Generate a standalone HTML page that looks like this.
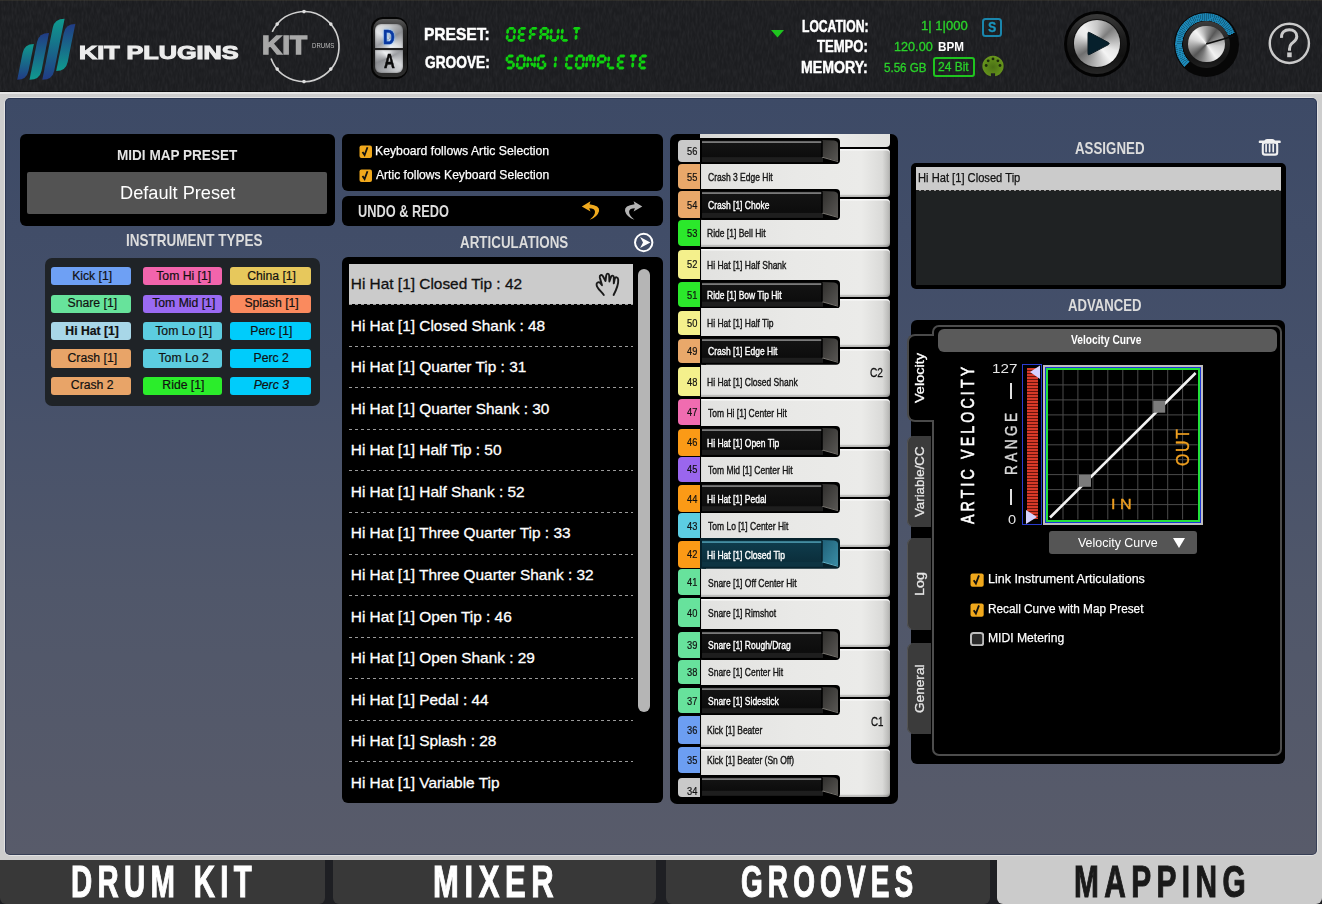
<!DOCTYPE html><html><head><meta charset="utf-8"><style>
html,body{margin:0;padding:0;width:1322px;height:904px;overflow:hidden;background:#1e1f23;}
.b{position:absolute;}
.t{position:absolute;white-space:nowrap;font-family:"Liberation Sans",sans-serif;}
</style></head><body>
<div class="b" style="left:0px;top:0px;width:1322px;height:93px;background:#1c1d20;"></div>
<div class="b" style="left:0px;top:0px;width:1322px;height:1px;background:#2c2b27;"></div>
<div class="b" style="left:0px;top:90.5px;width:1322px;height:1.5px;background:#0b0b0c;"></div>
<svg class="b" style="left:0;top:0" width="1322" height="93"><filter id="tx"><feTurbulence type="fractalNoise" baseFrequency="0.5 0.13" numOctaves="2" seed="11"/><feColorMatrix values="0 0 0 0 0.22  0 0 0 0 0.22  0 0 0 0 0.24  0 0 0 .2 -0.07"/></filter><rect width="1322" height="93" filter="url(#tx)"/></svg>
<svg class="b" style="left:0;top:0" width="90" height="93">
<defs>
<linearGradient id="g1" x1="0" y1="0" x2="0" y2="1"><stop offset="0" stop-color="#0f9a8e"/><stop offset="1" stop-color="#213b85"/></linearGradient>
<linearGradient id="g2" x1="0" y1="0" x2="0" y2="1"><stop offset="0" stop-color="#213b85"/><stop offset="1" stop-color="#0f9a8e"/></linearGradient>
</defs>
<path d="M17.2,79.7 L22.6,52.9 Q24.4,43.9 33.9,43.9 L28.5,70.7 Q26.7,79.7 17.2,79.7 Z" fill="url(#g1)"/>
<path d="M29.5,79.7 L37.0,42.1 Q38.8,33.1 49.0,33.1 L41.5,70.7 Q39.7,79.7 29.5,79.7 Z" fill="url(#g2)"/>
<path d="M42.3,79.7 L52.7,27.8 Q54.5,18.8 64.6,18.8 L54.2,70.7 Q52.4,79.7 42.3,79.7 Z" fill="url(#g1)"/>
<path d="M56.2,71.0 L63.8,33.0 Q65.6,24.0 75.3,24.0 L67.7,62.0 Q65.9,71.0 56.2,71.0 Z" fill="url(#g2)"/>
</svg>
<div class="t" style="left:78.86px;top:43.80px;font-size:17.44px;line-height:19.50px;color:#ececec;font-weight:bold;transform:scale(1.4443,1.0000);transform-origin:0 0;-webkit-text-stroke:1px #ececec;">KIT PLUGINS</div>
<svg class="b" style="left:0;top:0" width="360" height="93">
<path d="M271.11,58.57 A35,35 0 1,0 272.28,31.81" fill="none" stroke="#cfcfcf" stroke-width="1.6"/>
<circle cx="304.0" cy="11.6" r="1.8" fill="#ddd"/><circle cx="330.8" cy="24.1" r="1.8" fill="#ddd"/><circle cx="330.8" cy="69.1" r="1.8" fill="#ddd"/><circle cx="304.0" cy="81.6" r="1.8" fill="#ddd"/><circle cx="277.2" cy="69.1" r="1.8" fill="#ddd"/><circle cx="277.2" cy="24.1" r="1.8" fill="#ddd"/></svg>
<div class="t" style="left:262.38px;top:31.75px;font-size:25.00px;line-height:27.95px;color:#a8a8a8;font-weight:bold;transform:scale(1.1187,1.0000);transform-origin:0 0;-webkit-text-stroke:1.3px #a8a8a8;">KIT</div>
<div class="t" style="left:312.01px;top:42.35px;font-size:7.56px;line-height:8.45px;color:#bdbdbd;transform:scale(0.8030,1.0000);transform-origin:0 0;">DRUMS</div>
<div class="b" style="left:371px;top:17px;width:37px;height:62px;border-radius:12px;background:#050505;"></div>
<div class="b" style="left:372.5px;top:19px;width:34.0px;height:58px;border-radius:10px;background:linear-gradient(#5a5a5a,#2a2a2a 20%,#161616 60%,#303030);"></div>
<div class="b" style="left:375px;top:24px;width:28px;height:24.5px;border-radius:6px 6px 0 0;background:conic-gradient(from 0deg at 50% 60%,#c8cacc 0deg,#8e9094 60deg,#dfe1e3 130deg,#f2f3f4 170deg,#9c9ea2 240deg,#e2e4e6 300deg,#c8cacc 360deg);box-shadow:inset 0 0 2px rgba(0,0,0,.5);"></div>
<div class="b" style="left:375px;top:49.5px;width:28px;height:23.5px;border-radius:0 0 6px 6px;background:conic-gradient(from 0deg at 50% 35%,#e4e6e8 0deg,#9c9ea2 60deg,#d8dadc 120deg,#a8aaae 200deg,#8a8c90 250deg,#eceef0 320deg,#e4e6e8 360deg);box-shadow:inset 0 0 2px rgba(0,0,0,.5);"></div>
<div class="b" style="left:375px;top:48px;width:28px;height:2px;background:#222;"></div>
<div class="t" style="left:382.95px;top:24.80px;font-size:20.64px;line-height:23.08px;color:#0838a0;font-weight:bold;transform:scale(0.7846,1.0000);transform-origin:0 0;text-shadow:0 0 2px #8cc4ff,0 0 4px #7ab8ff;-webkit-text-stroke:0.6px #0838a0;">D</div>
<div class="t" style="left:383.63px;top:50.72px;font-size:19.62px;line-height:21.94px;color:#0a0a0a;font-weight:bold;transform:scale(0.7578,1.0000);transform-origin:0 0;-webkit-text-stroke:0.6px #0a0a0a;">A</div>
<div class="t" style="left:424.39px;top:24.86px;font-size:17.15px;line-height:19.18px;color:#fff;font-weight:bold;transform:scale(0.9070,1.0000);transform-origin:0 0;-webkit-text-stroke:0.5px #fff;">PRESET:</div>
<div class="t" style="left:424.85px;top:53.52px;font-size:16.86px;line-height:18.85px;color:#fff;font-weight:bold;transform:scale(0.8145,1.0000);transform-origin:0 0;-webkit-text-stroke:0.5px #fff;">GROOVE:</div>
<svg class="b" style="left:0;top:0" width="700" height="93"><g fill="#0fd20f"><polygon points="508.13,28.30 509.62,26.93 513.37,26.93 514.64,28.30 513.15,29.68 509.40,29.68"/><polygon points="514.82,28.50 516.08,29.88 515.86,32.73 514.37,34.10 513.11,32.73 513.33,29.88"/><polygon points="514.34,34.50 515.60,35.88 515.38,38.73 513.89,40.10 512.63,38.73 512.85,35.88"/><polygon points="507.18,40.30 508.66,38.92 512.41,38.92 513.68,40.30 512.19,41.67 508.44,41.67"/><polygon points="507.44,34.50 508.70,35.88 508.48,38.73 506.99,40.10 505.73,38.73 505.95,35.88"/><polygon points="507.92,28.50 509.18,29.88 508.96,32.73 507.47,34.10 506.21,32.73 506.43,29.88"/><polygon points="519.84,28.30 521.32,26.93 525.07,26.93 526.34,28.30 524.85,29.68 521.10,29.68"/><polygon points="518.88,40.30 520.36,38.92 524.11,38.92 525.38,40.30 523.89,41.67 520.14,41.67"/><polygon points="519.14,34.50 520.40,35.88 520.18,38.73 518.69,40.10 517.43,38.73 517.65,35.88"/><polygon points="519.62,28.50 520.88,29.88 520.66,32.73 519.17,34.10 517.91,32.73 518.13,29.88"/><polygon points="519.36,34.30 520.84,32.92 523.55,32.92 524.82,34.30 523.33,35.67 520.62,35.67"/><polygon points="530.94,28.30 532.42,26.93 536.17,26.93 537.44,28.30 535.95,29.68 532.20,29.68"/><polygon points="530.24,34.50 531.50,35.88 531.28,38.73 529.79,40.10 528.53,38.73 528.75,35.88"/><polygon points="530.72,28.50 531.98,29.88 531.76,32.73 530.27,34.10 529.01,32.73 529.23,29.88"/><polygon points="530.46,34.30 531.94,32.92 534.65,32.92 535.92,34.30 534.43,35.67 531.72,35.67"/><polygon points="541.44,28.30 542.92,26.93 546.67,26.93 547.94,28.30 546.45,29.68 542.70,29.68"/><polygon points="548.12,28.50 549.38,29.88 549.16,32.73 547.67,34.10 546.41,32.73 546.63,29.88"/><polygon points="547.64,34.50 548.90,35.88 548.68,38.73 547.19,40.10 545.93,38.73 546.15,35.88"/><polygon points="540.74,34.50 542.00,35.88 541.78,38.73 540.29,40.10 539.03,38.73 539.25,35.88"/><polygon points="541.22,28.50 542.48,29.88 542.26,32.73 540.77,34.10 539.51,32.73 539.73,29.88"/><polygon points="540.96,34.30 542.44,32.92 546.19,32.92 547.46,34.30 545.97,35.67 542.22,35.67"/><polygon points="558.42,28.50 559.68,29.88 559.46,32.73 557.97,34.10 556.71,32.73 556.93,29.88"/><polygon points="557.94,34.50 559.20,35.88 558.98,38.73 557.49,40.10 556.23,38.73 556.45,35.88"/><polygon points="550.78,40.30 552.26,38.92 556.01,38.92 557.28,40.30 555.79,41.67 552.04,41.67"/><polygon points="551.04,34.50 552.30,35.88 552.08,38.73 550.59,40.10 549.33,38.73 549.55,35.88"/><polygon points="551.52,28.50 552.78,29.88 552.56,32.73 551.07,34.10 549.81,32.73 550.03,29.88"/><polygon points="561.78,40.30 563.26,38.92 567.01,38.92 568.28,40.30 566.79,41.67 563.04,41.67"/><polygon points="562.04,34.50 563.30,35.88 563.08,38.73 561.59,40.10 560.33,38.73 560.55,35.88"/><polygon points="562.52,28.50 563.78,29.88 563.56,32.73 562.07,34.10 560.81,32.73 561.03,29.88"/><polygon points="572.94,28.30 574.42,26.93 579.37,26.93 580.63,28.30 579.15,29.68 574.20,29.68"/><polygon points="576.77,28.50 578.03,29.88 577.81,32.73 576.32,34.10 575.06,32.73 575.28,29.88"/><polygon points="576.29,34.50 577.55,35.88 577.33,38.73 575.84,40.10 574.58,38.73 574.80,35.88"/></g><g fill="#0fd20f"><polygon points="507.43,56.00 508.92,54.62 512.67,54.62 513.94,56.00 512.45,57.38 508.70,57.38"/><polygon points="513.64,62.20 514.90,63.58 514.68,66.42 513.19,67.80 511.93,66.42 512.15,63.58"/><polygon points="506.47,68.00 507.96,66.62 511.71,66.62 512.98,68.00 511.49,69.38 507.74,69.38"/><polygon points="507.22,56.20 508.48,57.58 508.26,60.42 506.77,61.80 505.51,60.42 505.73,57.58"/><polygon points="506.95,62.00 508.44,60.62 512.19,60.62 513.46,62.00 511.97,63.38 508.22,63.38"/><polygon points="518.14,56.00 519.62,54.62 523.37,54.62 524.64,56.00 523.15,57.38 519.40,57.38"/><polygon points="524.82,56.20 526.08,57.58 525.86,60.42 524.37,61.80 523.11,60.42 523.33,57.58"/><polygon points="524.34,62.20 525.60,63.58 525.38,66.42 523.89,67.80 522.63,66.42 522.85,63.58"/><polygon points="517.18,68.00 518.66,66.62 522.41,66.62 523.68,68.00 522.19,69.38 518.44,69.38"/><polygon points="517.44,62.20 518.70,63.58 518.48,66.42 516.99,67.80 515.73,66.42 515.95,63.58"/><polygon points="517.92,56.20 519.18,57.58 518.96,60.42 517.47,61.80 516.21,60.42 516.43,57.58"/><polygon points="535.22,56.20 536.48,57.58 536.26,60.42 534.77,61.80 533.51,60.42 533.73,57.58"/><polygon points="534.74,62.20 536.00,63.58 535.78,66.42 534.29,67.80 533.03,66.42 533.25,63.58"/><polygon points="527.84,62.20 529.10,63.58 528.88,66.42 527.39,67.80 526.13,66.42 526.35,63.58"/><polygon points="528.32,56.20 529.58,57.58 529.36,60.42 527.87,61.80 526.61,60.42 526.83,57.58"/><polygon points="528.70,58.84 530.26,61.82 532.48,60.53 530.92,57.56"/><polygon points="530.13,63.47 531.69,66.44 533.91,65.16 532.35,62.18"/><polygon points="538.94,56.00 540.42,54.62 544.17,54.62 545.44,56.00 543.95,57.38 540.20,57.38"/><polygon points="545.14,62.20 546.40,63.58 546.18,66.42 544.69,67.80 543.43,66.42 543.65,63.58"/><polygon points="537.98,68.00 539.46,66.62 543.21,66.62 544.48,68.00 542.99,69.38 539.24,69.38"/><polygon points="538.24,62.20 539.50,63.58 539.28,66.42 537.79,67.80 536.53,66.42 536.75,63.58"/><polygon points="538.72,56.20 539.98,57.58 539.76,60.42 538.27,61.80 537.01,60.42 537.23,57.58"/><polygon points="541.56,62.00 543.04,60.62 543.69,60.62 544.96,62.00 543.47,63.38 542.82,63.38"/><polygon points="555.82,56.20 557.08,57.58 556.86,60.42 555.37,61.80 554.11,60.42 554.33,57.58"/><polygon points="555.34,62.20 556.60,63.58 556.38,66.42 554.89,67.80 553.63,66.42 553.85,63.58"/><polygon points="567.24,56.00 568.72,54.62 572.47,54.62 573.74,56.00 572.25,57.38 568.50,57.38"/><polygon points="566.28,68.00 567.76,66.62 571.51,66.62 572.78,68.00 571.29,69.38 567.54,69.38"/><polygon points="566.54,62.20 567.80,63.58 567.58,66.42 566.09,67.80 564.83,66.42 565.05,63.58"/><polygon points="567.02,56.20 568.28,57.58 568.06,60.42 566.57,61.80 565.31,60.42 565.53,57.58"/><polygon points="577.14,56.00 578.62,54.62 582.37,54.62 583.64,56.00 582.15,57.38 578.40,57.38"/><polygon points="583.82,56.20 585.08,57.58 584.86,60.42 583.37,61.80 582.11,60.42 582.33,57.58"/><polygon points="583.34,62.20 584.60,63.58 584.38,66.42 582.89,67.80 581.63,66.42 581.85,63.58"/><polygon points="576.18,68.00 577.66,66.62 581.41,66.62 582.68,68.00 581.19,69.38 577.44,69.38"/><polygon points="576.44,62.20 577.70,63.58 577.48,66.42 575.99,67.80 574.73,66.42 574.95,63.58"/><polygon points="576.92,56.20 578.18,57.58 577.96,60.42 576.47,61.80 575.21,60.42 575.43,57.58"/><polygon points="587.44,56.00 588.92,54.62 592.67,54.62 593.94,56.00 592.45,57.38 588.70,57.38"/><polygon points="594.12,56.20 595.38,57.58 595.16,60.42 593.67,61.80 592.41,60.42 592.63,57.58"/><polygon points="593.64,62.20 594.90,63.58 594.68,66.42 593.19,67.80 591.93,66.42 592.15,63.58"/><polygon points="586.74,62.20 588.00,63.58 587.78,66.42 586.29,67.80 585.03,66.42 585.25,63.58"/><polygon points="587.22,56.20 588.48,57.58 588.26,60.42 586.77,61.80 585.51,60.42 585.73,57.58"/><polygon points="590.67,56.20 591.93,57.58 591.71,60.42 590.22,61.80 588.96,60.42 589.18,57.58"/><polygon points="598.84,56.00 600.32,54.62 604.07,54.62 605.34,56.00 603.85,57.38 600.10,57.38"/><polygon points="605.52,56.20 606.78,57.58 606.56,60.42 605.07,61.80 603.81,60.42 604.03,57.58"/><polygon points="598.14,62.20 599.40,63.58 599.18,66.42 597.69,67.80 596.43,66.42 596.65,63.58"/><polygon points="598.62,56.20 599.88,57.58 599.66,60.42 598.17,61.80 596.91,60.42 597.13,57.58"/><polygon points="598.36,62.00 599.84,60.62 603.59,60.62 604.86,62.00 603.37,63.38 599.62,63.38"/><polygon points="608.18,68.00 609.66,66.62 613.41,66.62 614.68,68.00 613.19,69.38 609.44,69.38"/><polygon points="608.44,62.20 609.70,63.58 609.48,66.42 607.99,67.80 606.73,66.42 606.95,63.58"/><polygon points="608.92,56.20 610.18,57.58 609.96,60.42 608.47,61.80 607.21,60.42 607.43,57.58"/><polygon points="618.94,56.00 620.42,54.62 624.17,54.62 625.44,56.00 623.95,57.38 620.20,57.38"/><polygon points="617.98,68.00 619.46,66.62 623.21,66.62 624.48,68.00 622.99,69.38 619.24,69.38"/><polygon points="618.24,62.20 619.50,63.58 619.28,66.42 617.79,67.80 616.53,66.42 616.75,63.58"/><polygon points="618.72,56.20 619.98,57.58 619.76,60.42 618.27,61.80 617.01,60.42 617.23,57.58"/><polygon points="618.46,62.00 619.94,60.62 622.65,60.62 623.92,62.00 622.43,63.38 619.72,63.38"/><polygon points="629.54,56.00 631.02,54.62 635.97,54.62 637.24,56.00 635.75,57.38 630.80,57.38"/><polygon points="633.37,56.20 634.63,57.58 634.41,60.42 632.92,61.80 631.66,60.42 631.88,57.58"/><polygon points="632.89,62.20 634.15,63.58 633.93,66.42 632.44,67.80 631.18,66.42 631.40,63.58"/><polygon points="640.74,56.00 642.22,54.62 645.97,54.62 647.24,56.00 645.75,57.38 642.00,57.38"/><polygon points="639.78,68.00 641.26,66.62 645.01,66.62 646.28,68.00 644.79,69.38 641.04,69.38"/><polygon points="640.04,62.20 641.30,63.58 641.08,66.42 639.59,67.80 638.33,66.42 638.55,63.58"/><polygon points="640.52,56.20 641.78,57.58 641.56,60.42 640.07,61.80 638.81,60.42 639.03,57.58"/><polygon points="640.26,62.00 641.74,60.62 644.46,60.62 645.72,62.00 644.24,63.38 641.52,63.38"/></g></svg>
<svg class="b" style="left:771px;top:30px" width="14" height="8"><path d="M0,0 L13,0 L6.5,7.5Z" fill="#1fc41f"/></svg>
<div class="t" style="left:801.61px;top:16.82px;font-size:16.42px;line-height:18.36px;color:#fff;font-weight:bold;transform:scale(0.7393,1.0000);transform-origin:0 0;-webkit-text-stroke:0.5px #fff;">LOCATION:</div>
<div class="t" style="left:817.37px;top:37.02px;font-size:16.42px;line-height:18.36px;color:#fff;font-weight:bold;transform:scale(0.7968,1.0000);transform-origin:0 0;-webkit-text-stroke:0.5px #fff;">TEMPO:</div>
<div class="t" style="left:801.48px;top:57.92px;font-size:16.42px;line-height:18.36px;color:#fff;font-weight:bold;transform:scale(0.8625,1.0000);transform-origin:0 0;-webkit-text-stroke:0.5px #fff;">MEMORY:</div>
<div class="t" style="left:921.02px;top:19.80px;font-size:11.92px;line-height:13.33px;color:#2ad22a;transform:scale(1.0969,1.0000);transform-origin:0 0;-webkit-text-stroke:0.3px #2ad22a;">1| 1|000</div>
<div class="t" style="left:894.05px;top:40.60px;font-size:11.92px;line-height:13.33px;color:#2ad22a;transform:scale(1.0627,1.0000);transform-origin:0 0;-webkit-text-stroke:0.3px #2ad22a;">120.00</div>
<div class="t" style="left:938.24px;top:40.60px;font-size:11.92px;line-height:13.33px;color:#fff;font-weight:bold;transform:scale(0.9824,1.0000);transform-origin:0 0;">BPM</div>
<div class="t" style="left:884.04px;top:61.80px;font-size:11.92px;line-height:13.33px;color:#2ad22a;transform:scale(0.9733,1.0000);transform-origin:0 0;-webkit-text-stroke:0.3px #2ad22a;">5.56 GB</div>
<div class="b" style="left:982.2px;top:17.5px;width:19.5px;height:19.700000000000003px;border:2px solid #1a86ad;border-radius:3.5px;box-sizing:border-box;"></div>
<div class="t" style="left:988.06px;top:18.34px;font-size:15.41px;line-height:17.23px;color:#1a96bf;font-weight:bold;transform:scale(0.8080,1.0000);transform-origin:0 0;-webkit-text-stroke:0.3px #1a96bf;">S</div>
<div class="b" style="left:933px;top:56.5px;width:42px;height:20.5px;border:2px solid #1fc41f;border-radius:3px;box-sizing:border-box;"></div>
<div class="t" style="left:938.40px;top:60.90px;font-size:11.92px;line-height:13.33px;color:#2ad22a;transform:scale(1.0058,1.0000);transform-origin:0 0;-webkit-text-stroke:0.3px #2ad22a;">24 Bit</div>
<svg class="b" style="left:980px;top:53px" width="26" height="26"><defs><radialGradient id="midg" cx="0.5" cy="0.55" r="0.5"><stop offset="0" stop-color="#4a7015"/><stop offset="1" stop-color="#66941c"/></radialGradient></defs><path d="M10.9,23.3 A10.6,10.4 0 1,1 15.1,23.3 L15.1,20.3 L10.9,20.3 Z" fill="url(#midg)"/><circle cx="6.2" cy="12.5" r="1.4" fill="#1c2a0c"/><circle cx="8.2" cy="7.8" r="1.4" fill="#1c2a0c"/><circle cx="13" cy="5.9" r="1.4" fill="#1c2a0c"/><circle cx="17.9" cy="7.8" r="1.4" fill="#1c2a0c"/><circle cx="20" cy="12.5" r="1.4" fill="#1c2a0c"/></svg>
<div class="b" style="left:1063.60px;top:10.60px;width:66.80px;height:66.80px;border-radius:50%;background:#030303;"></div>
<div class="b" style="left:1067.00px;top:14.00px;width:60.00px;height:60.00px;border-radius:50%;background:linear-gradient(180deg,#3a3a3a,#1c1c1c 40%,#111 70%,#262626);"></div>
<div class="b" style="left:1072.80px;top:19.40px;width:48.40px;height:48.40px;border-radius:50%;background:#111;"></div>
<div class="b" style="left:1073.60px;top:20.20px;width:46.80px;height:46.80px;border-radius:50%;background:conic-gradient(from 0deg,#c8c8c8 0deg,#7c7c7c 45deg,#e6e6e6 110deg,#f4f4f4 140deg,#8a8a8a 215deg,#6e6e6e 235deg,#e8e8e8 300deg,#f0f0f0 320deg,#c8c8c8 360deg);"></div>
<svg class="b" style="left:1080px;top:26px" width="36" height="36"><path d="M9.5,6.5 Q8,5.5 8,7.5 L8,27.5 Q8,29.5 9.5,28.5 L28.5,18.6 Q30,17.6 28.5,16.6 Z" fill="#06202c" stroke="#0a1a22" stroke-width="1"/></svg>
<div class="b" style="left:1172.70px;top:11.10px;width:67.00px;height:67.00px;border-radius:50%;background:radial-gradient(circle,rgba(30,110,150,0) 88%,rgba(30,110,150,.35) 96%,rgba(30,110,150,0) 100%);"></div>
<div class="b" style="left:1173.70px;top:12.10px;width:65.00px;height:65.00px;border-radius:50%;background:#070707;"></div>
<div class="b" style="left:1175.00px;top:13.40px;width:62.40px;height:62.40px;border-radius:50%;background:conic-gradient(from -136deg,#1e8cbc 0deg,#1a82b0 204deg,transparent 204deg,transparent 360deg);-webkit-mask:radial-gradient(circle,transparent 23.5px,#000 24px);mask:radial-gradient(circle,transparent 23.5px,#000 24px);"></div>
<div class="b" style="left:1175.00px;top:13.40px;width:62.40px;height:62.40px;border-radius:50%;background:repeating-conic-gradient(from -136deg,rgba(0,0,0,.25) 0deg 1.5deg,transparent 1.5deg 4deg);-webkit-mask:conic-gradient(from -136deg,#000 0deg 204deg,transparent 204deg),radial-gradient(circle,transparent 23.5px,#000 24px);-webkit-mask-composite:source-in;mask-composite:intersect;"></div>
<div class="b" style="left:1182.60px;top:20.60px;width:47.20px;height:47.20px;border-radius:50%;background:linear-gradient(180deg,#3c3c3c,#262626 40%,#141414 80%,#202020);"></div>
<div class="b" style="left:1187.80px;top:25.60px;width:36.80px;height:36.80px;border-radius:50%;background:conic-gradient(from 0deg,#9a9a9a 0deg,#585858 35deg,#cfcfcf 100deg,#f2f2f2 145deg,#7a7a7a 200deg,#555 225deg,#d8d8d8 290deg,#f4f4f4 320deg,#9a9a9a 360deg);"></div>
<svg class="b" style="left:1200px;top:30px" width="40" height="20"><path d="M6.2,14 L34,6" stroke="#0c0c0c" stroke-width="1.8"/></svg>
<svg class="b" style="left:1264px;top:18px" width="50" height="50"><circle cx="25.35" cy="25.35" r="19.6" fill="none" stroke="#cacaca" stroke-width="2.4"/><path d="M17.6,19.8 C17,14.3 20.8,11.8 25.2,11.8 C29.6,11.8 32.8,14.5 32.8,18.4 C32.8,22.3 29.6,23.8 27.4,25.8 C25.9,27.2 25.5,28.5 25.5,31 L25.5,32.8" fill="none" stroke="#cacaca" stroke-width="3"/><rect x="23.2" y="34.4" width="4.5" height="4.8" fill="#cacaca"/></svg>
<div class="b" style="left:0px;top:92px;width:1322px;height:768px;background:#cdcdcd;"></div>
<div class="b" style="left:0px;top:92px;width:1322px;height:1.5px;background:#e4e4e4;"></div>
<div class="b" style="left:4px;top:96.5px;width:1314px;height:759.5px;background:#e2e2e2;border-radius:7px;"></div>
<div class="b" style="left:5px;top:97.5px;width:1312px;height:757.5px;border-radius:5px;background:linear-gradient(180deg,#3d4a66 0%,#45506a 35%,#50576a 65%,#585b6a 100%);box-shadow:inset 0 0 0 1px rgba(30,40,70,.55);"></div>
<div class="b" style="left:20px;top:134px;width:315px;height:92px;background:#000;border-radius:6px;"></div>
<div class="t" style="left:116.67px;top:146.60px;font-size:15.12px;line-height:16.90px;color:#e4e4e4;font-weight:bold;transform:scale(0.8971,1.0000);transform-origin:0 0;">MIDI MAP PRESET</div>
<div class="b" style="left:27px;top:172px;width:300px;height:42px;background:#535353;border-radius:2px;"></div>
<div class="t" style="left:119.74px;top:182.58px;font-size:18.46px;line-height:20.64px;color:#fff;transform:scale(0.9860,1.0000);transform-origin:0 0;">Default Preset</div>
<div class="t" style="left:125.57px;top:231.51px;font-size:15.99px;line-height:17.88px;color:#dcdcdc;font-weight:bold;transform:scale(0.8441,1.0000);transform-origin:0 0;">INSTRUMENT TYPES</div>
<div class="b" style="left:45px;top:258px;width:275px;height:148px;background:#1f2327;border-radius:7px;"></div>
<div class="b" style="left:51px;top:267px;width:80px;height:18.30000000000001px;background:#6ea0f4;border-radius:3px;"></div>
<div class="t" style="left:72.13px;top:269.64px;font-size:12.21px;line-height:13.65px;color:#111;-webkit-text-stroke:0.2px #111;">Kick [1]</div>
<div class="b" style="left:142.5px;top:267px;width:79.5px;height:18.30000000000001px;background:#f264ac;border-radius:3px;"></div>
<div class="t" style="left:156.28px;top:269.64px;font-size:12.21px;line-height:13.65px;color:#111;-webkit-text-stroke:0.2px #111;">Tom Hi [1]</div>
<div class="b" style="left:230px;top:267px;width:80.5px;height:18.30000000000001px;background:#e7c85c;border-radius:3px;"></div>
<div class="t" style="left:247.14px;top:269.64px;font-size:12.21px;line-height:13.65px;color:#111;-webkit-text-stroke:0.2px #111;">China [1]</div>
<div class="b" style="left:51px;top:294.5px;width:80px;height:18.30000000000001px;background:#67e39b;border-radius:3px;"></div>
<div class="t" style="left:67.58px;top:297.14px;font-size:12.21px;line-height:13.65px;color:#111;-webkit-text-stroke:0.2px #111;">Snare [1]</div>
<div class="b" style="left:142.5px;top:294.5px;width:79.5px;height:18.30000000000001px;background:#9a6af2;border-radius:3px;"></div>
<div class="t" style="left:152.21px;top:297.14px;font-size:12.21px;line-height:13.65px;color:#111;-webkit-text-stroke:0.2px #111;">Tom Mid [1]</div>
<div class="b" style="left:230px;top:294.5px;width:80.5px;height:18.30000000000001px;background:#fa8a5e;border-radius:3px;"></div>
<div class="t" style="left:244.45px;top:297.14px;font-size:12.21px;line-height:13.65px;color:#111;-webkit-text-stroke:0.2px #111;">Splash [1]</div>
<div class="b" style="left:51px;top:322px;width:80px;height:18.30000000000001px;background:#a8d7e8;border-radius:3px;"></div>
<div class="t" style="left:65.34px;top:324.64px;font-size:12.21px;line-height:13.65px;color:#111;font-weight:bold;-webkit-text-stroke:0.2px #111;">Hi Hat [1]</div>
<div class="b" style="left:142.5px;top:322px;width:79.5px;height:18.30000000000001px;background:#5ccde0;border-radius:3px;"></div>
<div class="t" style="left:155.25px;top:324.64px;font-size:12.21px;line-height:13.65px;color:#111;-webkit-text-stroke:0.2px #111;">Tom Lo [1]</div>
<div class="b" style="left:230px;top:322px;width:80.5px;height:18.30000000000001px;background:#00ccfb;border-radius:3px;"></div>
<div class="t" style="left:250.36px;top:324.64px;font-size:12.21px;line-height:13.65px;color:#111;-webkit-text-stroke:0.2px #111;">Perc [1]</div>
<div class="b" style="left:51px;top:349.3px;width:80px;height:18.30000000000001px;background:#e8a468;border-radius:3px;"></div>
<div class="t" style="left:67.55px;top:351.94px;font-size:12.21px;line-height:13.65px;color:#111;-webkit-text-stroke:0.2px #111;">Crash [1]</div>
<div class="b" style="left:142.5px;top:349.3px;width:79.5px;height:18.30000000000001px;background:#5ccde0;border-radius:3px;"></div>
<div class="t" style="left:158.51px;top:351.94px;font-size:12.21px;line-height:13.65px;color:#111;-webkit-text-stroke:0.2px #111;">Tom Lo 2</div>
<div class="b" style="left:230px;top:349.3px;width:80.5px;height:18.30000000000001px;background:#00ccfb;border-radius:3px;"></div>
<div class="t" style="left:253.61px;top:351.94px;font-size:12.21px;line-height:13.65px;color:#111;-webkit-text-stroke:0.2px #111;">Perc 2</div>
<div class="b" style="left:51px;top:376.7px;width:80px;height:18.30000000000001px;background:#e8a468;border-radius:3px;"></div>
<div class="t" style="left:70.82px;top:379.34px;font-size:12.21px;line-height:13.65px;color:#111;-webkit-text-stroke:0.2px #111;">Crash 2</div>
<div class="b" style="left:142.5px;top:376.7px;width:79.5px;height:18.30000000000001px;background:#2bed2b;border-radius:3px;"></div>
<div class="t" style="left:162.36px;top:379.34px;font-size:12.21px;line-height:13.65px;color:#111;-webkit-text-stroke:0.2px #111;">Ride [1]</div>
<div class="b" style="left:230px;top:376.7px;width:80.5px;height:18.30000000000001px;background:#00ccfb;border-radius:3px;"></div>
<div class="t" style="left:253.67px;top:379.34px;font-size:12.21px;line-height:13.65px;color:#111;font-style:italic;-webkit-text-stroke:0.2px #111;">Perc 3</div>
<div class="b" style="left:342px;top:134.3px;width:321px;height:57.099999999999994px;background:#000;border-radius:6px;"></div>
<svg class="b" style="left:359px;top:145.2px" width="13.5" height="13.5"><rect x="0.5" y="0.5" width="12.5" height="12.5" rx="2" fill="#f0a81c"/><path d="M3.5,6.9 L5.6,10.0 L8.5,2.2" fill="none" stroke="#111" stroke-width="1.8"/></svg>
<div class="t" style="left:375.32px;top:143.74px;font-size:12.65px;line-height:14.14px;color:#fff;transform:scale(0.9683,1.0000);transform-origin:0 0;-webkit-text-stroke:0.25px #fff;">Keyboard follows Artic Selection</div>
<svg class="b" style="left:359px;top:169.2px" width="13.5" height="13.5"><rect x="0.5" y="0.5" width="12.5" height="12.5" rx="2" fill="#f0a81c"/><path d="M3.5,6.9 L5.6,10.0 L8.5,2.2" fill="none" stroke="#111" stroke-width="1.8"/></svg>
<div class="t" style="left:376.30px;top:167.74px;font-size:12.65px;line-height:14.14px;color:#fff;transform:scale(0.9591,1.0000);transform-origin:0 0;-webkit-text-stroke:0.25px #fff;">Artic follows Keyboard Selection</div>
<div class="b" style="left:342px;top:196.3px;width:321px;height:30.099999999999994px;background:#000;border-radius:6px;"></div>
<div class="t" style="left:358.23px;top:202.15px;font-size:16.28px;line-height:18.20px;color:#dedede;font-weight:bold;transform:scale(0.7869,1.0000);transform-origin:0 0;">UNDO &amp; REDO</div>
<svg class="b" style="left:575px;top:195px" width="80" height="30"><path d="M6.8,11.5 L15.5,6.3 L14.5,9.2 Q25.0,10.5 24.1,16.0 Q22.5,22.0 14.7,24.8 Q20.5,20.0 20.0,16.5 Q19.5,13.2 14.2,13.2 L15.5,16.4 Z" fill="#f0aa1e"/><path d="M67.3,11.5 L58.6,6.3 L59.6,9.2 Q49.1,10.5 50.0,16.0 Q51.6,22.0 59.4,24.8 Q53.6,20.0 54.1,16.5 Q54.6,13.2 59.9,13.2 L58.6,16.4 Z" fill="#b4b4b4"/></svg>
<div class="t" style="left:459.87px;top:232.92px;font-size:16.42px;line-height:18.36px;color:#dcdcdc;font-weight:bold;transform:scale(0.8158,1.0000);transform-origin:0 0;">ARTICULATIONS</div>
<svg class="b" style="left:633px;top:232px" width="22" height="22"><circle cx="10.7" cy="10.5" r="8.7" fill="none" stroke="#fff" stroke-width="2"/><path d="M17.4,10.5 L7.1,5 L10,10.5 L7.1,16.1 Z" fill="#fff"/></svg>
<div class="b" style="left:342px;top:257.2px;width:321px;height:545.8px;background:#000;border-radius:6px;"></div>
<div class="b" style="left:348.8px;top:264px;width:283.8px;height:40.19999999999999px;background:#cbcbcb;"></div>
<div class="t" style="left:350.77px;top:275.14px;font-size:15.41px;line-height:17.23px;color:#111;-webkit-text-stroke:0.3px #111;">Hi Hat [1] Closed Tip : 42</div>
<div class="b" style="left:348.8px;top:304.2px;width:283.8px;height:1.0px;background:repeating-linear-gradient(90deg,#9a9a9a 0 3px,transparent 3px 6px);"></div>
<div class="t" style="left:350.77px;top:316.69px;font-size:15.41px;line-height:17.23px;color:#fff;-webkit-text-stroke:0.3px #fff;">Hi Hat [1] Closed Shank : 48</div>
<div class="b" style="left:348.8px;top:345.75px;width:283.8px;height:1.0px;background:repeating-linear-gradient(90deg,#9a9a9a 0 3px,transparent 3px 6px);"></div>
<div class="t" style="left:350.77px;top:358.24px;font-size:15.41px;line-height:17.23px;color:#fff;-webkit-text-stroke:0.3px #fff;">Hi Hat [1] Quarter Tip : 31</div>
<div class="b" style="left:348.8px;top:387.29999999999995px;width:283.8px;height:1.0px;background:repeating-linear-gradient(90deg,#9a9a9a 0 3px,transparent 3px 6px);"></div>
<div class="t" style="left:350.77px;top:399.79px;font-size:15.41px;line-height:17.23px;color:#fff;-webkit-text-stroke:0.3px #fff;">Hi Hat [1] Quarter Shank : 30</div>
<div class="b" style="left:348.8px;top:428.84999999999997px;width:283.8px;height:1.0px;background:repeating-linear-gradient(90deg,#9a9a9a 0 3px,transparent 3px 6px);"></div>
<div class="t" style="left:350.77px;top:441.34px;font-size:15.41px;line-height:17.23px;color:#fff;-webkit-text-stroke:0.3px #fff;">Hi Hat [1] Half Tip : 50</div>
<div class="b" style="left:348.8px;top:470.4px;width:283.8px;height:1.0px;background:repeating-linear-gradient(90deg,#9a9a9a 0 3px,transparent 3px 6px);"></div>
<div class="t" style="left:350.77px;top:482.89px;font-size:15.41px;line-height:17.23px;color:#fff;-webkit-text-stroke:0.3px #fff;">Hi Hat [1] Half Shank : 52</div>
<div class="b" style="left:348.8px;top:511.95px;width:283.8px;height:1.0000000000000568px;background:repeating-linear-gradient(90deg,#9a9a9a 0 3px,transparent 3px 6px);"></div>
<div class="t" style="left:350.77px;top:524.44px;font-size:15.41px;line-height:17.23px;color:#fff;-webkit-text-stroke:0.3px #fff;">Hi Hat [1] Three Quarter Tip : 33</div>
<div class="b" style="left:348.8px;top:553.5px;width:283.8px;height:1.0px;background:repeating-linear-gradient(90deg,#9a9a9a 0 3px,transparent 3px 6px);"></div>
<div class="t" style="left:350.77px;top:565.99px;font-size:15.41px;line-height:17.23px;color:#fff;-webkit-text-stroke:0.3px #fff;">Hi Hat [1] Three Quarter Shank : 32</div>
<div class="b" style="left:348.8px;top:595.05px;width:283.8px;height:1.0px;background:repeating-linear-gradient(90deg,#9a9a9a 0 3px,transparent 3px 6px);"></div>
<div class="t" style="left:350.77px;top:607.54px;font-size:15.41px;line-height:17.23px;color:#fff;-webkit-text-stroke:0.3px #fff;">Hi Hat [1] Open Tip : 46</div>
<div class="b" style="left:348.8px;top:636.5999999999999px;width:283.8px;height:1.0px;background:repeating-linear-gradient(90deg,#9a9a9a 0 3px,transparent 3px 6px);"></div>
<div class="t" style="left:350.77px;top:649.09px;font-size:15.41px;line-height:17.23px;color:#fff;-webkit-text-stroke:0.3px #fff;">Hi Hat [1] Open Shank : 29</div>
<div class="b" style="left:348.8px;top:678.15px;width:283.8px;height:1.0px;background:repeating-linear-gradient(90deg,#9a9a9a 0 3px,transparent 3px 6px);"></div>
<div class="t" style="left:350.77px;top:690.64px;font-size:15.41px;line-height:17.23px;color:#fff;-webkit-text-stroke:0.3px #fff;">Hi Hat [1] Pedal : 44</div>
<div class="b" style="left:348.8px;top:719.7px;width:283.8px;height:1.0px;background:repeating-linear-gradient(90deg,#9a9a9a 0 3px,transparent 3px 6px);"></div>
<div class="t" style="left:350.77px;top:732.19px;font-size:15.41px;line-height:17.23px;color:#fff;-webkit-text-stroke:0.3px #fff;">Hi Hat [1] Splash : 28</div>
<div class="b" style="left:348.8px;top:761.25px;width:283.8px;height:1.0px;background:repeating-linear-gradient(90deg,#9a9a9a 0 3px,transparent 3px 6px);"></div>
<div class="t" style="left:350.77px;top:773.74px;font-size:15.41px;line-height:17.23px;color:#fff;-webkit-text-stroke:0.3px #fff;">Hi Hat [1] Variable Tip</div>
<svg class="b" style="left:585px;top:262px" width="45" height="40"><path d="M18.8,33 C16,29 12,26.5 11.6,22.8 C11.3,20.5 13.5,19.6 15,20.6 L17,23.3 L14.8,15.5 C14.3,13 16.8,12 17.8,14 L20.5,19 L21.2,13.5 C21.5,11 24,11 24.2,13.5 L24.4,19.5 L26,15 C26.6,13 28.7,13.3 28.8,15.3 L28.8,21.4 L29.8,16.5 C30.5,14.5 33,15 33.2,17.5 C33.5,21 32.8,25 28.6,33" fill="none" stroke="#1a1a1a" stroke-width="1.9" stroke-linecap="round" stroke-linejoin="round"/></svg>
<div class="b" style="left:638.3px;top:268.5px;width:11.300000000000068px;height:443.5px;background:#b5b5b5;border-radius:6px;"></div>
<div class="b" style="left:670px;top:134px;width:228px;height:669.5px;background:#000;border-radius:7px;"></div>
<div class="b" style="left:700px;top:134px;width:190px;height:12.5px;background:linear-gradient(90deg,#d6d6d4,#efefed 60%,#e0e0de);border-radius:0 0 4px 0;"></div><div class="b" style="left:701.3px;top:148.8px;width:188.70000000000005px;height:48.0px;background:linear-gradient(90deg,#e2e2e0 0%,#e9e9e7 50%,#ebebe9 85%,#dadad8 96%,#b4b4b2 100%);border-radius:0 4px 4px 0;box-shadow:inset 0 -2px 1.5px rgba(0,0,0,.2), inset 0 1.5px 0 rgba(255,255,255,.8);"></div><div class="b" style="left:701.3px;top:198.8px;width:188.70000000000005px;height:48.0px;background:linear-gradient(90deg,#e2e2e0 0%,#e9e9e7 50%,#ebebe9 85%,#dadad8 96%,#b4b4b2 100%);border-radius:0 4px 4px 0;box-shadow:inset 0 -2px 1.5px rgba(0,0,0,.2), inset 0 1.5px 0 rgba(255,255,255,.8);"></div><div class="b" style="left:701.3px;top:248.8px;width:188.70000000000005px;height:48.0px;background:linear-gradient(90deg,#e2e2e0 0%,#e9e9e7 50%,#ebebe9 85%,#dadad8 96%,#b4b4b2 100%);border-radius:0 4px 4px 0;box-shadow:inset 0 -2px 1.5px rgba(0,0,0,.2), inset 0 1.5px 0 rgba(255,255,255,.8);"></div><div class="b" style="left:701.3px;top:298.8px;width:188.70000000000005px;height:48.0px;background:linear-gradient(90deg,#e2e2e0 0%,#e9e9e7 50%,#ebebe9 85%,#dadad8 96%,#b4b4b2 100%);border-radius:0 4px 4px 0;box-shadow:inset 0 -2px 1.5px rgba(0,0,0,.2), inset 0 1.5px 0 rgba(255,255,255,.8);"></div><div class="b" style="left:701.3px;top:348.8px;width:188.70000000000005px;height:48.0px;background:linear-gradient(90deg,#e2e2e0 0%,#e9e9e7 50%,#ebebe9 85%,#dadad8 96%,#b4b4b2 100%);border-radius:0 4px 4px 0;box-shadow:inset 0 -2px 1.5px rgba(0,0,0,.2), inset 0 1.5px 0 rgba(255,255,255,.8);"></div><div class="b" style="left:701.3px;top:398.8px;width:188.70000000000005px;height:48.0px;background:linear-gradient(90deg,#e2e2e0 0%,#e9e9e7 50%,#ebebe9 85%,#dadad8 96%,#b4b4b2 100%);border-radius:0 4px 4px 0;box-shadow:inset 0 -2px 1.5px rgba(0,0,0,.2), inset 0 1.5px 0 rgba(255,255,255,.8);"></div><div class="b" style="left:701.3px;top:448.8px;width:188.70000000000005px;height:48.0px;background:linear-gradient(90deg,#e2e2e0 0%,#e9e9e7 50%,#ebebe9 85%,#dadad8 96%,#b4b4b2 100%);border-radius:0 4px 4px 0;box-shadow:inset 0 -2px 1.5px rgba(0,0,0,.2), inset 0 1.5px 0 rgba(255,255,255,.8);"></div><div class="b" style="left:701.3px;top:498.8px;width:188.70000000000005px;height:47.99999999999994px;background:linear-gradient(90deg,#e2e2e0 0%,#e9e9e7 50%,#ebebe9 85%,#dadad8 96%,#b4b4b2 100%);border-radius:0 4px 4px 0;box-shadow:inset 0 -2px 1.5px rgba(0,0,0,.2), inset 0 1.5px 0 rgba(255,255,255,.8);"></div><div class="b" style="left:701.3px;top:548.8px;width:188.70000000000005px;height:48.0px;background:linear-gradient(90deg,#e2e2e0 0%,#e9e9e7 50%,#ebebe9 85%,#dadad8 96%,#b4b4b2 100%);border-radius:0 4px 4px 0;box-shadow:inset 0 -2px 1.5px rgba(0,0,0,.2), inset 0 1.5px 0 rgba(255,255,255,.8);"></div><div class="b" style="left:701.3px;top:598.8px;width:188.70000000000005px;height:48.0px;background:linear-gradient(90deg,#e2e2e0 0%,#e9e9e7 50%,#ebebe9 85%,#dadad8 96%,#b4b4b2 100%);border-radius:0 4px 4px 0;box-shadow:inset 0 -2px 1.5px rgba(0,0,0,.2), inset 0 1.5px 0 rgba(255,255,255,.8);"></div><div class="b" style="left:701.3px;top:648.8px;width:188.70000000000005px;height:48.0px;background:linear-gradient(90deg,#e2e2e0 0%,#e9e9e7 50%,#ebebe9 85%,#dadad8 96%,#b4b4b2 100%);border-radius:0 4px 4px 0;box-shadow:inset 0 -2px 1.5px rgba(0,0,0,.2), inset 0 1.5px 0 rgba(255,255,255,.8);"></div><div class="b" style="left:701.3px;top:698.8px;width:188.70000000000005px;height:48.0px;background:linear-gradient(90deg,#e2e2e0 0%,#e9e9e7 50%,#ebebe9 85%,#dadad8 96%,#b4b4b2 100%);border-radius:0 4px 4px 0;box-shadow:inset 0 -2px 1.5px rgba(0,0,0,.2), inset 0 1.5px 0 rgba(255,255,255,.8);"></div><div class="b" style="left:701.3px;top:748.8px;width:188.70000000000005px;height:48.0px;background:linear-gradient(90deg,#e2e2e0 0%,#e9e9e7 50%,#ebebe9 85%,#dadad8 96%,#b4b4b2 100%);border-radius:0 4px 4px 0;box-shadow:inset 0 -2px 1.5px rgba(0,0,0,.2), inset 0 1.5px 0 rgba(255,255,255,.8);"></div>
<svg class="b" style="left:700px;top:137.60px" width="142" height="26.10"><defs>
<linearGradient id="bk56b" x1="0" y1="0" x2="0" y2="1"><stop offset="0" stop-color="#141414"/><stop offset="1" stop-color="#0c0c0c"/></linearGradient>
<linearGradient id="bk56v" x1="0" y1="0" x2="1" y2="1"><stop offset="0" stop-color="#2e2d2b"/><stop offset="1" stop-color="#5a5855"/></linearGradient></defs>
<rect x="0" y="0" width="140" height="26.10" rx="4" fill="#000"/>
<rect x="0" y="0" width="6" height="26.10" fill="#000"/>
<rect x="2" y="2.5" width="121" height="17.10" fill="url(#bk56b)"/>
<rect x="2" y="3.2" width="120" height="1.8" fill="#8c8c8c" opacity="0.85"/>
<rect x="2" y="19.10" width="121" height="5" fill="#1e1e1e"/>
<path d="M122,2 L134,2.5 Q138,3 138,6 L138,23.10 L122,19.10 Z" fill="url(#bk56v)"/>
<path d="M122,19.10 L138,23.60" stroke="#77746f" stroke-width="1"/>
<path d="M122,2.5 L122,19.10" stroke="#000" stroke-width="1.5"/>
</svg>
<svg class="b" style="left:700px;top:188.80px" width="142" height="30.90"><defs>
<linearGradient id="bk54b" x1="0" y1="0" x2="0" y2="1"><stop offset="0" stop-color="#141414"/><stop offset="1" stop-color="#0c0c0c"/></linearGradient>
<linearGradient id="bk54v" x1="0" y1="0" x2="1" y2="1"><stop offset="0" stop-color="#2e2d2b"/><stop offset="1" stop-color="#5a5855"/></linearGradient></defs>
<rect x="0" y="0" width="140" height="30.90" rx="4" fill="#000"/>
<rect x="0" y="0" width="6" height="30.90" fill="#000"/>
<rect x="2" y="2.5" width="121" height="21.90" fill="url(#bk54b)"/>
<rect x="2" y="3.2" width="120" height="1.8" fill="#8c8c8c" opacity="0.85"/>
<rect x="2" y="23.90" width="121" height="5" fill="#1e1e1e"/>
<path d="M122,2 L134,2.5 Q138,3 138,6 L138,27.90 L122,23.90 Z" fill="url(#bk54v)"/>
<path d="M122,23.90 L138,28.40" stroke="#77746f" stroke-width="1"/>
<path d="M122,2.5 L122,23.90" stroke="#000" stroke-width="1.5"/>
</svg>
<svg class="b" style="left:700px;top:279.80px" width="142" height="28.70"><defs>
<linearGradient id="bk51b" x1="0" y1="0" x2="0" y2="1"><stop offset="0" stop-color="#141414"/><stop offset="1" stop-color="#0c0c0c"/></linearGradient>
<linearGradient id="bk51v" x1="0" y1="0" x2="1" y2="1"><stop offset="0" stop-color="#2e2d2b"/><stop offset="1" stop-color="#5a5855"/></linearGradient></defs>
<rect x="0" y="0" width="140" height="28.70" rx="4" fill="#000"/>
<rect x="0" y="0" width="6" height="28.70" fill="#000"/>
<rect x="2" y="2.5" width="121" height="19.70" fill="url(#bk51b)"/>
<rect x="2" y="3.2" width="120" height="1.8" fill="#8c8c8c" opacity="0.85"/>
<rect x="2" y="21.70" width="121" height="5" fill="#1e1e1e"/>
<path d="M122,2 L134,2.5 Q138,3 138,6 L138,25.70 L122,21.70 Z" fill="url(#bk51v)"/>
<path d="M122,21.70 L138,26.20" stroke="#77746f" stroke-width="1"/>
<path d="M122,2.5 L122,21.70" stroke="#000" stroke-width="1.5"/>
</svg>
<svg class="b" style="left:700px;top:336.20px" width="142" height="28.80"><defs>
<linearGradient id="bk49b" x1="0" y1="0" x2="0" y2="1"><stop offset="0" stop-color="#141414"/><stop offset="1" stop-color="#0c0c0c"/></linearGradient>
<linearGradient id="bk49v" x1="0" y1="0" x2="1" y2="1"><stop offset="0" stop-color="#2e2d2b"/><stop offset="1" stop-color="#5a5855"/></linearGradient></defs>
<rect x="0" y="0" width="140" height="28.80" rx="4" fill="#000"/>
<rect x="0" y="0" width="6" height="28.80" fill="#000"/>
<rect x="2" y="2.5" width="121" height="19.80" fill="url(#bk49b)"/>
<rect x="2" y="3.2" width="120" height="1.8" fill="#8c8c8c" opacity="0.85"/>
<rect x="2" y="21.80" width="121" height="5" fill="#1e1e1e"/>
<path d="M122,2 L134,2.5 Q138,3 138,6 L138,25.80 L122,21.80 Z" fill="url(#bk49v)"/>
<path d="M122,21.80 L138,26.30" stroke="#77746f" stroke-width="1"/>
<path d="M122,2.5 L122,21.80" stroke="#000" stroke-width="1.5"/>
</svg>
<svg class="b" style="left:700px;top:426.40px" width="142" height="30.90"><defs>
<linearGradient id="bk46b" x1="0" y1="0" x2="0" y2="1"><stop offset="0" stop-color="#141414"/><stop offset="1" stop-color="#0c0c0c"/></linearGradient>
<linearGradient id="bk46v" x1="0" y1="0" x2="1" y2="1"><stop offset="0" stop-color="#2e2d2b"/><stop offset="1" stop-color="#5a5855"/></linearGradient></defs>
<rect x="0" y="0" width="140" height="30.90" rx="4" fill="#000"/>
<rect x="0" y="0" width="6" height="30.90" fill="#000"/>
<rect x="2" y="2.5" width="121" height="21.90" fill="url(#bk46b)"/>
<rect x="2" y="3.2" width="120" height="1.8" fill="#8c8c8c" opacity="0.85"/>
<rect x="2" y="23.90" width="121" height="5" fill="#1e1e1e"/>
<path d="M122,2 L134,2.5 Q138,3 138,6 L138,27.90 L122,23.90 Z" fill="url(#bk46v)"/>
<path d="M122,23.90 L138,28.40" stroke="#77746f" stroke-width="1"/>
<path d="M122,2.5 L122,23.90" stroke="#000" stroke-width="1.5"/>
</svg>
<svg class="b" style="left:700px;top:482.30px" width="142" height="31.20"><defs>
<linearGradient id="bk44b" x1="0" y1="0" x2="0" y2="1"><stop offset="0" stop-color="#141414"/><stop offset="1" stop-color="#0c0c0c"/></linearGradient>
<linearGradient id="bk44v" x1="0" y1="0" x2="1" y2="1"><stop offset="0" stop-color="#2e2d2b"/><stop offset="1" stop-color="#5a5855"/></linearGradient></defs>
<rect x="0" y="0" width="140" height="31.20" rx="4" fill="#000"/>
<rect x="0" y="0" width="6" height="31.20" fill="#000"/>
<rect x="2" y="2.5" width="121" height="22.20" fill="url(#bk44b)"/>
<rect x="2" y="3.2" width="120" height="1.8" fill="#8c8c8c" opacity="0.85"/>
<rect x="2" y="24.20" width="121" height="5" fill="#1e1e1e"/>
<path d="M122,2 L134,2.5 Q138,3 138,6 L138,28.20 L122,24.20 Z" fill="url(#bk44v)"/>
<path d="M122,24.20 L138,28.70" stroke="#77746f" stroke-width="1"/>
<path d="M122,2.5 L122,24.20" stroke="#000" stroke-width="1.5"/>
</svg>
<svg class="b" style="left:700px;top:538.40px" width="142" height="30.80"><defs>
<linearGradient id="bk42b" x1="0" y1="0" x2="0" y2="1"><stop offset="0" stop-color="#0f3d4e"/><stop offset="1" stop-color="#0b2e3b"/></linearGradient>
<linearGradient id="bk42v" x1="0" y1="0" x2="1" y2="1"><stop offset="0" stop-color="#1f6078"/><stop offset="1" stop-color="#3b8ea6"/></linearGradient></defs>
<rect x="0" y="0" width="140" height="30.80" rx="4" fill="#06222c"/>
<rect x="0" y="0" width="6" height="30.80" fill="#06222c"/>
<rect x="2" y="2.5" width="121" height="21.80" fill="url(#bk42b)"/>
<rect x="2" y="3.2" width="120" height="1.8" fill="#4e9bb0" opacity="0.85"/>
<rect x="2" y="23.80" width="121" height="5" fill="#0d3442"/>
<path d="M122,2 L134,2.5 Q138,3 138,6 L138,27.80 L122,23.80 Z" fill="url(#bk42v)"/>
<path d="M122,23.80 L138,28.30" stroke="#5fb0c6" stroke-width="1"/>
<path d="M122,2.5 L122,23.80" stroke="#06222c" stroke-width="1.5"/>
</svg>
<svg class="b" style="left:700px;top:629.00px" width="142" height="30.90"><defs>
<linearGradient id="bk39b" x1="0" y1="0" x2="0" y2="1"><stop offset="0" stop-color="#141414"/><stop offset="1" stop-color="#0c0c0c"/></linearGradient>
<linearGradient id="bk39v" x1="0" y1="0" x2="1" y2="1"><stop offset="0" stop-color="#2e2d2b"/><stop offset="1" stop-color="#5a5855"/></linearGradient></defs>
<rect x="0" y="0" width="140" height="30.90" rx="4" fill="#000"/>
<rect x="0" y="0" width="6" height="30.90" fill="#000"/>
<rect x="2" y="2.5" width="121" height="21.90" fill="url(#bk39b)"/>
<rect x="2" y="3.2" width="120" height="1.8" fill="#8c8c8c" opacity="0.85"/>
<rect x="2" y="23.90" width="121" height="5" fill="#1e1e1e"/>
<path d="M122,2 L134,2.5 Q138,3 138,6 L138,27.90 L122,23.90 Z" fill="url(#bk39v)"/>
<path d="M122,23.90 L138,28.40" stroke="#77746f" stroke-width="1"/>
<path d="M122,2.5 L122,23.90" stroke="#000" stroke-width="1.5"/>
</svg>
<svg class="b" style="left:700px;top:685.00px" width="142" height="30.20"><defs>
<linearGradient id="bk37b" x1="0" y1="0" x2="0" y2="1"><stop offset="0" stop-color="#141414"/><stop offset="1" stop-color="#0c0c0c"/></linearGradient>
<linearGradient id="bk37v" x1="0" y1="0" x2="1" y2="1"><stop offset="0" stop-color="#2e2d2b"/><stop offset="1" stop-color="#5a5855"/></linearGradient></defs>
<rect x="0" y="0" width="140" height="30.20" rx="4" fill="#000"/>
<rect x="0" y="0" width="6" height="30.20" fill="#000"/>
<rect x="2" y="2.5" width="121" height="21.20" fill="url(#bk37b)"/>
<rect x="2" y="3.2" width="120" height="1.8" fill="#8c8c8c" opacity="0.85"/>
<rect x="2" y="23.20" width="121" height="5" fill="#1e1e1e"/>
<path d="M122,2 L134,2.5 Q138,3 138,6 L138,27.20 L122,23.20 Z" fill="url(#bk37v)"/>
<path d="M122,23.20 L138,27.70" stroke="#77746f" stroke-width="1"/>
<path d="M122,2.5 L122,23.20" stroke="#000" stroke-width="1.5"/>
</svg>
<svg class="b" style="left:700px;top:775.40px" width="142" height="22.80"><defs>
<linearGradient id="bk34b" x1="0" y1="0" x2="0" y2="1"><stop offset="0" stop-color="#141414"/><stop offset="1" stop-color="#0c0c0c"/></linearGradient>
<linearGradient id="bk34v" x1="0" y1="0" x2="1" y2="1"><stop offset="0" stop-color="#2e2d2b"/><stop offset="1" stop-color="#5a5855"/></linearGradient></defs>
<rect x="0" y="0" width="140" height="22.80" rx="4" fill="#000"/>
<rect x="0" y="0" width="6" height="22.80" fill="#000"/>
<rect x="2" y="2.5" width="121" height="13.80" fill="url(#bk34b)"/>
<rect x="2" y="3.2" width="120" height="1.8" fill="#8c8c8c" opacity="0.85"/>
<rect x="2" y="15.80" width="121" height="5" fill="#1e1e1e"/>
<path d="M122,2 L134,2.5 Q138,3 138,6 L138,19.80 L122,15.80 Z" fill="url(#bk34v)"/>
<path d="M122,15.80 L138,20.30" stroke="#77746f" stroke-width="1"/>
<path d="M122,2.5 L122,15.80" stroke="#000" stroke-width="1.5"/>
</svg>
<div class="b" style="left:678px;top:140.2px;width:22px;height:21.80000000000001px;background:#c9c9c9;border-radius:4px 0 0 4px;"></div>
<div class="t" style="left:686.89px;top:146.25px;font-size:10.32px;line-height:11.54px;color:#111;transform:scale(0.9000,1.0000);transform-origin:0 0;-webkit-text-stroke:0.2px #111;">56</div>
<div class="b" style="left:678px;top:163.7px;width:22px;height:25.5px;background:#e9a86a;border-radius:4px 0 0 4px;"></div>
<div class="t" style="left:686.86px;top:171.60px;font-size:10.32px;line-height:11.54px;color:#111;transform:scale(0.9000,1.0000);transform-origin:0 0;-webkit-text-stroke:0.2px #111;">55</div>
<div class="t" style="left:707.57px;top:170.88px;font-size:11.34px;line-height:12.68px;color:#151515;transform:scale(0.7500,1.0000);transform-origin:0 0;-webkit-text-stroke:0.4px #151515;">Crash 3 Edge Hit</div>
<div class="b" style="left:678px;top:191.4px;width:22px;height:26.599999999999994px;background:#e9a86a;border-radius:4px 0 0 4px;"></div>
<div class="t" style="left:686.75px;top:199.85px;font-size:10.32px;line-height:11.54px;color:#111;transform:scale(0.9000,1.0000);transform-origin:0 0;-webkit-text-stroke:0.2px #111;">54</div>
<div class="t" style="left:707.57px;top:199.13px;font-size:11.34px;line-height:12.68px;color:#fff;transform:scale(0.7500,1.0000);transform-origin:0 0;-webkit-text-stroke:0.4px #fff;">Crash [1] Choke</div>
<div class="b" style="left:678px;top:219.6px;width:22px;height:26.400000000000006px;background:#2be82b;border-radius:4px 0 0 4px;"></div>
<div class="t" style="left:686.89px;top:227.95px;font-size:10.32px;line-height:11.54px;color:#111;transform:scale(0.9000,1.0000);transform-origin:0 0;-webkit-text-stroke:0.2px #111;">53</div>
<div class="t" style="left:707.32px;top:227.23px;font-size:11.34px;line-height:12.68px;color:#151515;transform:scale(0.7500,1.0000);transform-origin:0 0;-webkit-text-stroke:0.4px #151515;">Ride [1] Bell Hit</div>
<div class="b" style="left:678px;top:249.6px;width:22px;height:29.00000000000003px;background:#f4f08c;border-radius:4px 0 0 4px;"></div>
<div class="t" style="left:686.93px;top:259.25px;font-size:10.32px;line-height:11.54px;color:#111;transform:scale(0.9000,1.0000);transform-origin:0 0;-webkit-text-stroke:0.2px #111;">52</div>
<div class="t" style="left:707.32px;top:258.53px;font-size:11.34px;line-height:12.68px;color:#151515;transform:scale(0.7500,1.0000);transform-origin:0 0;-webkit-text-stroke:0.4px #151515;">Hi Hat [1] Half Shank</div>
<div class="b" style="left:678px;top:282.4px;width:22px;height:24.400000000000034px;background:#2be82b;border-radius:4px 0 0 4px;"></div>
<div class="t" style="left:686.93px;top:289.75px;font-size:10.32px;line-height:11.54px;color:#111;transform:scale(0.9000,1.0000);transform-origin:0 0;-webkit-text-stroke:0.2px #111;">51</div>
<div class="t" style="left:707.32px;top:289.03px;font-size:11.34px;line-height:12.68px;color:#fff;transform:scale(0.7500,1.0000);transform-origin:0 0;-webkit-text-stroke:0.4px #fff;">Ride [1] Bow Tip Hit</div>
<div class="b" style="left:678px;top:310.6px;width:22px;height:24.399999999999977px;background:#f4f08c;border-radius:4px 0 0 4px;"></div>
<div class="t" style="left:686.84px;top:317.95px;font-size:10.32px;line-height:11.54px;color:#111;transform:scale(0.9000,1.0000);transform-origin:0 0;-webkit-text-stroke:0.2px #111;">50</div>
<div class="t" style="left:707.32px;top:317.23px;font-size:11.34px;line-height:12.68px;color:#151515;transform:scale(0.7500,1.0000);transform-origin:0 0;-webkit-text-stroke:0.4px #151515;">Hi Hat [1] Half Tip</div>
<div class="b" style="left:678px;top:338.8px;width:22px;height:24.5px;background:#e9a86a;border-radius:4px 0 0 4px;"></div>
<div class="t" style="left:686.91px;top:346.20px;font-size:10.32px;line-height:11.54px;color:#111;transform:scale(0.9000,1.0000);transform-origin:0 0;-webkit-text-stroke:0.2px #111;">49</div>
<div class="t" style="left:707.57px;top:345.48px;font-size:11.34px;line-height:12.68px;color:#fff;transform:scale(0.7500,1.0000);transform-origin:0 0;-webkit-text-stroke:0.4px #fff;">Crash [1] Edge Hit</div>
<div class="b" style="left:678px;top:367px;width:22px;height:29.399999999999977px;background:#f4f08c;border-radius:4px 0 0 4px;"></div>
<div class="t" style="left:686.86px;top:376.85px;font-size:10.32px;line-height:11.54px;color:#111;transform:scale(0.9000,1.0000);transform-origin:0 0;-webkit-text-stroke:0.2px #111;">48</div>
<div class="t" style="left:707.32px;top:376.13px;font-size:11.34px;line-height:12.68px;color:#151515;transform:scale(0.7500,1.0000);transform-origin:0 0;-webkit-text-stroke:0.4px #151515;">Hi Hat [1] Closed Shank</div>
<div class="b" style="left:678px;top:399px;width:22px;height:26.30000000000001px;background:#f06cb0;border-radius:4px 0 0 4px;"></div>
<div class="t" style="left:686.93px;top:407.30px;font-size:10.32px;line-height:11.54px;color:#111;transform:scale(0.9000,1.0000);transform-origin:0 0;-webkit-text-stroke:0.2px #111;">47</div>
<div class="t" style="left:707.83px;top:406.58px;font-size:11.34px;line-height:12.68px;color:#151515;transform:scale(0.7500,1.0000);transform-origin:0 0;-webkit-text-stroke:0.4px #151515;">Tom Hi [1] Center Hit</div>
<div class="b" style="left:678px;top:429px;width:22px;height:26.600000000000023px;background:#fb9a16;border-radius:4px 0 0 4px;"></div>
<div class="t" style="left:686.89px;top:437.45px;font-size:10.32px;line-height:11.54px;color:#111;transform:scale(0.9000,1.0000);transform-origin:0 0;-webkit-text-stroke:0.2px #111;">46</div>
<div class="t" style="left:707.32px;top:436.73px;font-size:11.34px;line-height:12.68px;color:#fff;transform:scale(0.7500,1.0000);transform-origin:0 0;-webkit-text-stroke:0.4px #fff;">Hi Hat [1] Open Tip</div>
<div class="b" style="left:678px;top:457px;width:22px;height:24.5px;background:#9a66ee;border-radius:4px 0 0 4px;"></div>
<div class="t" style="left:686.86px;top:464.40px;font-size:10.32px;line-height:11.54px;color:#111;transform:scale(0.9000,1.0000);transform-origin:0 0;-webkit-text-stroke:0.2px #111;">45</div>
<div class="t" style="left:707.83px;top:463.68px;font-size:11.34px;line-height:12.68px;color:#151515;transform:scale(0.7500,1.0000);transform-origin:0 0;-webkit-text-stroke:0.4px #151515;">Tom Mid [1] Center Hit</div>
<div class="b" style="left:678px;top:484.9px;width:22px;height:26.900000000000034px;background:#fb9a16;border-radius:4px 0 0 4px;"></div>
<div class="t" style="left:686.75px;top:493.50px;font-size:10.32px;line-height:11.54px;color:#111;transform:scale(0.9000,1.0000);transform-origin:0 0;-webkit-text-stroke:0.2px #111;">44</div>
<div class="t" style="left:707.32px;top:492.78px;font-size:11.34px;line-height:12.68px;color:#fff;transform:scale(0.7500,1.0000);transform-origin:0 0;-webkit-text-stroke:0.4px #fff;">Hi Hat [1] Pedal</div>
<div class="b" style="left:678px;top:513.3px;width:22px;height:24.300000000000068px;background:#5ccde2;border-radius:4px 0 0 4px;"></div>
<div class="t" style="left:686.89px;top:520.60px;font-size:10.32px;line-height:11.54px;color:#111;transform:scale(0.9000,1.0000);transform-origin:0 0;-webkit-text-stroke:0.2px #111;">43</div>
<div class="t" style="left:707.83px;top:519.88px;font-size:11.34px;line-height:12.68px;color:#151515;transform:scale(0.7500,1.0000);transform-origin:0 0;-webkit-text-stroke:0.4px #151515;">Tom Lo [1] Center Hit</div>
<div class="b" style="left:678px;top:541px;width:22px;height:26.5px;background:#fb9a16;border-radius:4px 0 0 4px;"></div>
<div class="t" style="left:686.93px;top:549.40px;font-size:10.32px;line-height:11.54px;color:#111;transform:scale(0.9000,1.0000);transform-origin:0 0;-webkit-text-stroke:0.2px #111;">42</div>
<div class="t" style="left:707.32px;top:548.68px;font-size:11.34px;line-height:12.68px;color:#fff;transform:scale(0.7500,1.0000);transform-origin:0 0;-webkit-text-stroke:0.4px #fff;">Hi Hat [1] Closed Tip</div>
<div class="b" style="left:678px;top:569px;width:22px;height:26.399999999999977px;background:#67e29c;border-radius:4px 0 0 4px;"></div>
<div class="t" style="left:686.93px;top:577.35px;font-size:10.32px;line-height:11.54px;color:#111;transform:scale(0.9000,1.0000);transform-origin:0 0;-webkit-text-stroke:0.2px #111;">41</div>
<div class="t" style="left:707.62px;top:576.63px;font-size:11.34px;line-height:12.68px;color:#151515;transform:scale(0.7500,1.0000);transform-origin:0 0;-webkit-text-stroke:0.4px #151515;">Snare [1] Off Center Hit</div>
<div class="b" style="left:678px;top:597.8px;width:22px;height:29.600000000000023px;background:#67e29c;border-radius:4px 0 0 4px;"></div>
<div class="t" style="left:686.84px;top:607.75px;font-size:10.32px;line-height:11.54px;color:#111;transform:scale(0.9000,1.0000);transform-origin:0 0;-webkit-text-stroke:0.2px #111;">40</div>
<div class="t" style="left:707.62px;top:607.03px;font-size:11.34px;line-height:12.68px;color:#151515;transform:scale(0.7500,1.0000);transform-origin:0 0;-webkit-text-stroke:0.4px #151515;">Snare [1] Rimshot</div>
<div class="b" style="left:678px;top:631.6px;width:22px;height:26.600000000000023px;background:#67e29c;border-radius:4px 0 0 4px;"></div>
<div class="t" style="left:686.91px;top:640.05px;font-size:10.32px;line-height:11.54px;color:#111;transform:scale(0.9000,1.0000);transform-origin:0 0;-webkit-text-stroke:0.2px #111;">39</div>
<div class="t" style="left:707.62px;top:639.33px;font-size:11.34px;line-height:12.68px;color:#fff;transform:scale(0.7500,1.0000);transform-origin:0 0;-webkit-text-stroke:0.4px #fff;">Snare [1] Rough/Drag</div>
<div class="b" style="left:678px;top:660px;width:22px;height:24px;background:#67e29c;border-radius:4px 0 0 4px;"></div>
<div class="t" style="left:686.86px;top:667.15px;font-size:10.32px;line-height:11.54px;color:#111;transform:scale(0.9000,1.0000);transform-origin:0 0;-webkit-text-stroke:0.2px #111;">38</div>
<div class="t" style="left:707.62px;top:666.43px;font-size:11.34px;line-height:12.68px;color:#151515;transform:scale(0.7500,1.0000);transform-origin:0 0;-webkit-text-stroke:0.4px #151515;">Snare [1] Center Hit</div>
<div class="b" style="left:678px;top:687.6px;width:22px;height:25.899999999999977px;background:#67e29c;border-radius:4px 0 0 4px;"></div>
<div class="t" style="left:686.93px;top:695.70px;font-size:10.32px;line-height:11.54px;color:#111;transform:scale(0.9000,1.0000);transform-origin:0 0;-webkit-text-stroke:0.2px #111;">37</div>
<div class="t" style="left:707.62px;top:694.98px;font-size:11.34px;line-height:12.68px;color:#fff;transform:scale(0.7500,1.0000);transform-origin:0 0;-webkit-text-stroke:0.4px #fff;">Snare [1] Sidestick</div>
<div class="b" style="left:678px;top:715.6px;width:22px;height:28.799999999999955px;background:#6c9ef2;border-radius:4px 0 0 4px;"></div>
<div class="t" style="left:686.89px;top:725.15px;font-size:10.32px;line-height:11.54px;color:#111;transform:scale(0.9000,1.0000);transform-origin:0 0;-webkit-text-stroke:0.2px #111;">36</div>
<div class="t" style="left:707.32px;top:724.43px;font-size:11.34px;line-height:12.68px;color:#151515;transform:scale(0.7500,1.0000);transform-origin:0 0;-webkit-text-stroke:0.4px #151515;">Kick [1] Beater</div>
<div class="b" style="left:678px;top:746.7px;width:22px;height:26.699999999999932px;background:#6c9ef2;border-radius:4px 0 0 4px;"></div>
<div class="t" style="left:686.86px;top:755.20px;font-size:10.32px;line-height:11.54px;color:#111;transform:scale(0.9000,1.0000);transform-origin:0 0;-webkit-text-stroke:0.2px #111;">35</div>
<div class="t" style="left:707.32px;top:754.48px;font-size:11.34px;line-height:12.68px;color:#151515;transform:scale(0.7500,1.0000);transform-origin:0 0;-webkit-text-stroke:0.4px #151515;">Kick [1] Beater (Sn Off)</div>
<div class="b" style="left:678px;top:778px;width:22px;height:18.5px;background:#c9c9c9;border-radius:4px 0 0 4px;"></div>
<div class="t" style="left:686.75px;top:786.35px;font-size:10.32px;line-height:11.54px;color:#111;transform:scale(0.9000,1.0000);transform-origin:0 0;-webkit-text-stroke:0.2px #111;">34</div>
<div class="t" style="left:870.49px;top:366.07px;font-size:12.50px;line-height:13.98px;color:#111;transform:scale(0.8136,1.0000);transform-origin:0 0;-webkit-text-stroke:0.3px #111;">C2</div>
<div class="t" style="left:871.01px;top:715.27px;font-size:12.50px;line-height:13.98px;color:#111;transform:scale(0.7797,1.0000);transform-origin:0 0;-webkit-text-stroke:0.3px #111;">C1</div>
<div class="t" style="left:1075.12px;top:138.75px;font-size:16.28px;line-height:18.20px;color:#dcdcdc;font-weight:bold;transform:scale(0.8183,1.0000);transform-origin:0 0;">ASSIGNED</div>
<svg class="b" style="left:1250px;top:130px" width="40" height="32"><rect x="8.7" y="10.6" width="22.1" height="2.5" rx="1.2" fill="#f0f0f0"/><path d="M14.2,11 Q15,9.1 17,9.1 L22.4,9.1 Q24.4,9.1 25.1,11 Z" fill="#f0f0f0"/><rect x="12.8" y="12.6" width="14.4" height="12" rx="2.2" fill="none" stroke="#f0f0f0" stroke-width="2.1"/><path d="M16.1,14.6 L16.1,21.6 M19.6,14.6 L19.6,21.6 M23.2,14.6 L23.2,21.6" stroke="#f0f0f0" stroke-width="1.7" stroke-linecap="round"/></svg>
<div class="b" style="left:911px;top:162.5px;width:374.5px;height:126.0px;background:#000;border-radius:5px;"></div>
<div class="b" style="left:915.5px;top:167px;width:365.5px;height:117.5px;background:#1f2223;"></div>
<div class="b" style="left:916px;top:167.2px;width:364.5px;height:23.700000000000017px;background:#cbcbcb;"></div>
<div class="b" style="left:916px;top:190.4px;width:364.5px;height:1.0px;background:repeating-linear-gradient(90deg,#222 0 3px,#999 3px 5px);"></div>
<div class="t" style="left:917.61px;top:171.24px;font-size:12.65px;line-height:14.14px;color:#111;transform:scale(0.8826,1.0000);transform-origin:0 0;-webkit-text-stroke:0.25px #111;">Hi Hat [1] Closed Tip</div>
<div class="t" style="left:1067.87px;top:295.88px;font-size:16.13px;line-height:18.04px;color:#dcdcdc;font-weight:bold;transform:scale(0.8163,1.0000);transform-origin:0 0;">ADVANCED</div>
<div class="b" style="left:911px;top:319.5px;width:374px;height:444.5px;background:#000;border-radius:6px;"></div>
<div class="b" style="left:906.5px;top:334px;width:27.5px;height:88px;background:#000;border:2px solid #4a4a4a;border-right:none;border-radius:8px 0 0 8px;box-sizing:border-box;"></div>
<div class="b" style="left:906.5px;top:436px;width:24.5px;height:91px;background:#3b3b3b;border-radius:7px 0 0 7px;box-shadow:inset 1px 0 0 #555;"></div>
<div class="b" style="left:906.5px;top:538px;width:24.5px;height:92px;background:#3b3b3b;border-radius:7px 0 0 7px;box-shadow:inset 1px 0 0 #555;"></div>
<div class="b" style="left:906.5px;top:643px;width:24.5px;height:91px;background:#3b3b3b;border-radius:7px 0 0 7px;box-shadow:inset 1px 0 0 #555;"></div>
<div class="b" style="left:932px;top:324.5px;width:350px;height:431.5px;border:2px solid #4d4d4d;border-radius:7px;box-sizing:border-box;"></div>
<div class="b" style="left:931px;top:336px;width:4px;height:84px;background:#000;"></div>
<div class="b" style="left:920px;top:377.5px;width:0;height:0;transform:rotate(-90deg);"><div class="b" style="left:-25.0px;top:-4.6px;width:0;height:0"><div class="t" style="left:-0.04px;top:-2.92px;font-size:13.37px;line-height:14.95px;color:#fff;transform:scale(1.0854,1.0000);transform-origin:0 0;-webkit-text-stroke:0.3px #fff;">Velocity</div></div></div>
<div class="b" style="left:919.5px;top:481.5px;width:0;height:0;transform:rotate(-90deg);"><div class="b" style="left:-35.0px;top:-4.7px;width:0;height:0"><div class="t" style="left:-0.03px;top:-2.98px;font-size:13.66px;line-height:15.28px;color:#e6e6e6;transform:scale(0.9708,1.0000);transform-origin:0 0;-webkit-text-stroke:0.3px #e6e6e6;">Variable/CC</div></div></div>
<div class="b" style="left:919.5px;top:584px;width:0;height:0;transform:rotate(-90deg);"><div class="b" style="left:-11.0px;top:-4.5px;width:0;height:0"><div class="t" style="left:-1.15px;top:-2.85px;font-size:13.08px;line-height:14.63px;color:#e6e6e6;transform:scale(1.1028,1.0000);transform-origin:0 0;-webkit-text-stroke:0.3px #e6e6e6;">Log</div></div></div>
<div class="b" style="left:919.5px;top:688.5px;width:0;height:0;transform:rotate(-90deg);"><div class="b" style="left:-23.5px;top:-4.6px;width:0;height:0"><div class="t" style="left:-0.68px;top:-2.92px;font-size:13.37px;line-height:14.95px;color:#e6e6e6;transform:scale(1.0210,1.0000);transform-origin:0 0;-webkit-text-stroke:0.3px #e6e6e6;">General</div></div></div>
<div class="b" style="left:937.7px;top:329px;width:338.89999999999986px;height:23px;background:#5a5a5a;border-radius:6px;"></div>
<div class="t" style="left:1071.45px;top:334.20px;font-size:11.92px;line-height:13.33px;color:#fff;font-weight:bold;transform:scale(0.8571,1.0000);transform-origin:0 0;">Velocity Curve</div>
<div class="b" style="left:967.5px;top:446px;width:0;height:0;transform:rotate(-90deg);"><div class="b" style="left:-78.5px;top:-6.25px;width:0;height:0"><div class="t" style="left:0.00px;top:-3.96px;font-size:18.17px;line-height:20.31px;color:#fff;letter-spacing:4px;transform:scale(0.7822,1.0000);transform-origin:0 0;-webkit-text-stroke:0.6px #fff;">ARTIC VELOCITY</div></div></div>
<div class="b" style="left:1011.5px;top:444px;width:0;height:0;transform:rotate(-90deg);"><div class="b" style="left:-30.25px;top:-5.5px;width:0;height:0"><div class="t" style="left:-1.09px;top:-3.49px;font-size:15.99px;line-height:17.88px;color:#d8d8d8;letter-spacing:4px;transform:scale(0.8531,1.0000);transform-origin:0 0;-webkit-text-stroke:0.4px #d8d8d8;">RANGE</div></div></div>
<div class="b" style="left:1009.8px;top:383.4px;width:2.6000000000000227px;height:16.0px;background:#e0e0e0;"></div>
<div class="b" style="left:1009.8px;top:488.7px;width:2.6000000000000227px;height:16.0px;background:#e0e0e0;"></div>
<div class="t" style="left:991.86px;top:362.21px;font-size:12.79px;line-height:14.30px;color:#e6e6e6;transform:scale(1.1892,1.0000);transform-origin:0 0;">127</div>
<div class="t" style="left:1008.45px;top:512.71px;font-size:12.79px;line-height:14.30px;color:#e6e6e6;transform:scale(1.1402,1.0000);transform-origin:0 0;">0</div>
<div class="b" style="left:1022.2px;top:364.3px;width:19.799999999999955px;height:161.09999999999997px;border:1.5px solid #2a3cd0;background:#000;box-sizing:border-box;"></div>
<div class="b" style="left:1026.5px;top:367.5px;width:11.5px;height:151.5px;background:repeating-linear-gradient(180deg,#d83a28 0 1.6px,#6a140c 1.6px 3px);"></div>
<svg class="b" style="left:1022px;top:364px" width="22" height="164"><path d="M18,1.5 L18,15 L8,8Z" fill="#d6d2ff"/><path d="M4,146 L4,160 L15,153Z" fill="#d6d2ff"/></svg>
<div class="b" style="left:1043px;top:365px;width:159.5999999999999px;height:159.5px;background:#bdbdbd;"></div><div class="b" style="left:1044.5px;top:366.5px;width:156.5999999999999px;height:156.5px;background:#1a33d6;"></div><div class="b" style="left:1046px;top:368px;width:153.5999999999999px;height:153.5px;background:#22e03a;"></div>
<svg class="b" style="left:1048px;top:370px;background:#000" width="149.6" height="149.5"><path d="M15.0,0 L15.0,149.5" stroke="#4a4a4a" stroke-width="1"/><path d="M0,14.9 L149.5999999999999,14.9" stroke="#4a4a4a" stroke-width="1"/><path d="M29.9,0 L29.9,149.5" stroke="#4a4a4a" stroke-width="1"/><path d="M0,29.9 L149.5999999999999,29.9" stroke="#4a4a4a" stroke-width="1"/><path d="M44.9,0 L44.9,149.5" stroke="#4a4a4a" stroke-width="1"/><path d="M0,44.9 L149.5999999999999,44.9" stroke="#4a4a4a" stroke-width="1"/><path d="M59.8,0 L59.8,149.5" stroke="#4a4a4a" stroke-width="1"/><path d="M0,59.8 L149.5999999999999,59.8" stroke="#4a4a4a" stroke-width="1"/><path d="M74.8,0 L74.8,149.5" stroke="#4a4a4a" stroke-width="1"/><path d="M0,74.8 L149.5999999999999,74.8" stroke="#4a4a4a" stroke-width="1"/><path d="M89.8,0 L89.8,149.5" stroke="#4a4a4a" stroke-width="1"/><path d="M0,89.7 L149.5999999999999,89.7" stroke="#4a4a4a" stroke-width="1"/><path d="M104.7,0 L104.7,149.5" stroke="#4a4a4a" stroke-width="1"/><path d="M0,104.6 L149.5999999999999,104.6" stroke="#4a4a4a" stroke-width="1"/><path d="M119.7,0 L119.7,149.5" stroke="#4a4a4a" stroke-width="1"/><path d="M0,119.6 L149.5999999999999,119.6" stroke="#4a4a4a" stroke-width="1"/><path d="M134.6,0 L134.6,149.5" stroke="#4a4a4a" stroke-width="1"/><path d="M0,134.6 L149.5999999999999,134.6" stroke="#4a4a4a" stroke-width="1"/><path d="M2,147.5 L147.6,3" stroke="#f2f2f2" stroke-width="2.6"/><rect x="31" y="104.80000000000001" width="12" height="12" fill="#7b7b7b"/><rect x="105.20000000000005" y="30.69999999999999" width="12" height="12" fill="#7b7b7b"/></svg>
<div class="t" style="left:1110.55px;top:495.74px;font-size:14.97px;line-height:16.74px;color:#f0a020;transform:scale(1.0736,1.0000);transform-origin:0 0;-webkit-text-stroke:0.4px #f0a020;">I N</div>
<div class="b" style="left:1182.5px;top:446.8px;width:0;height:0;transform:rotate(-90deg);"><div class="b" style="left:-18.0px;top:-6.25px;width:0;height:0"><div class="t" style="left:-0.72px;top:-3.96px;font-size:18.17px;line-height:20.31px;color:#f0a020;letter-spacing:2px;transform:scale(0.8747,1.0000);transform-origin:0 0;-webkit-text-stroke:0.4px #f0a020;">OUT</div></div></div>
<div class="b" style="left:1049.4px;top:531.2px;width:147.39999999999986px;height:23.0px;background:#555;border-radius:3px;"></div>
<div class="t" style="left:1078.47px;top:535.95px;font-size:13.08px;line-height:14.63px;color:#fff;transform:scale(0.9518,1.0000);transform-origin:0 0;">Velocity Curve</div>
<svg class="b" style="left:1172px;top:537px" width="14" height="12"><path d="M1,1 L13,1 L7,11Z" fill="#fff"/></svg>
<svg class="b" style="left:970px;top:573px" width="14.2" height="14.2"><rect x="0.5" y="0.5" width="13.2" height="13.2" rx="2" fill="#f0a81c"/><path d="M3.7,7.3 L5.9,10.6 L9.0,2.4" fill="none" stroke="#111" stroke-width="1.8"/></svg>
<div class="t" style="left:987.50px;top:572.35px;font-size:13.08px;line-height:14.63px;color:#fff;transform:scale(0.9592,1.0000);transform-origin:0 0;-webkit-text-stroke:0.25px #fff;">Link Instrument Articulations</div>
<svg class="b" style="left:970px;top:602.5px" width="14.2" height="14.2"><rect x="0.5" y="0.5" width="13.2" height="13.2" rx="2" fill="#f0a81c"/><path d="M3.7,7.3 L5.9,10.6 L9.0,2.4" fill="none" stroke="#111" stroke-width="1.8"/></svg>
<div class="t" style="left:987.56px;top:601.85px;font-size:13.08px;line-height:14.63px;color:#fff;transform:scale(0.9024,1.0000);transform-origin:0 0;-webkit-text-stroke:0.25px #fff;">Recall Curve with Map Preset</div>
<svg class="b" style="left:970px;top:632px" width="14.2" height="14.2"><rect x="1" y="1" width="12.2" height="12.2" rx="2.5" fill="#2a2a2a" stroke="#bdbdbd" stroke-width="2"/></svg>
<div class="t" style="left:987.53px;top:631.35px;font-size:13.08px;line-height:14.63px;color:#fff;transform:scale(0.9283,1.0000);transform-origin:0 0;-webkit-text-stroke:0.25px #fff;">MIDI Metering</div>
<div class="b" style="left:0px;top:860px;width:1322px;height:44px;background:#1e1f23;"></div>
<div class="b" style="left:0px;top:859.5px;width:324.8px;height:44.5px;background:#383838;border-radius:0 0 6px 6px;"></div>
<div class="b" style="left:332.6px;top:859.5px;width:323.19999999999993px;height:44.5px;background:#383838;border-radius:0 0 6px 6px;"></div>
<div class="b" style="left:665.6px;top:859.5px;width:324.0px;height:44.5px;background:#383838;border-radius:0 0 6px 6px;"></div>
<div class="b" style="left:997px;top:859.5px;width:325px;height:44.5px;background:#cbcbcb;border-radius:0 0 6px 6px;"></div>
<div class="t" style="left:71.09px;top:857.20px;font-size:44.04px;line-height:49.24px;color:#fff;font-weight:bold;letter-spacing:8px;transform:scale(0.6659,1.0000);transform-origin:0 0;-webkit-text-stroke:1.1px #fff;">DRUM KIT</div>
<div class="t" style="left:432.99px;top:857.20px;font-size:44.04px;line-height:49.24px;color:#fff;font-weight:bold;letter-spacing:8px;transform:scale(0.7034,1.0000);transform-origin:0 0;-webkit-text-stroke:1.1px #fff;">MIXER</div>
<div class="t" style="left:741.38px;top:857.20px;font-size:44.04px;line-height:49.24px;color:#fff;font-weight:bold;letter-spacing:8px;transform:scale(0.6359,1.0000);transform-origin:0 0;-webkit-text-stroke:1.1px #fff;">GROOVES</div>
<div class="t" style="left:1073.56px;top:857.20px;font-size:44.04px;line-height:49.24px;color:#1a1a1a;font-weight:bold;letter-spacing:8px;transform:scale(0.6773,1.0000);transform-origin:0 0;-webkit-text-stroke:1.1px #1a1a1a;">MAPPING</div>
</body></html>
